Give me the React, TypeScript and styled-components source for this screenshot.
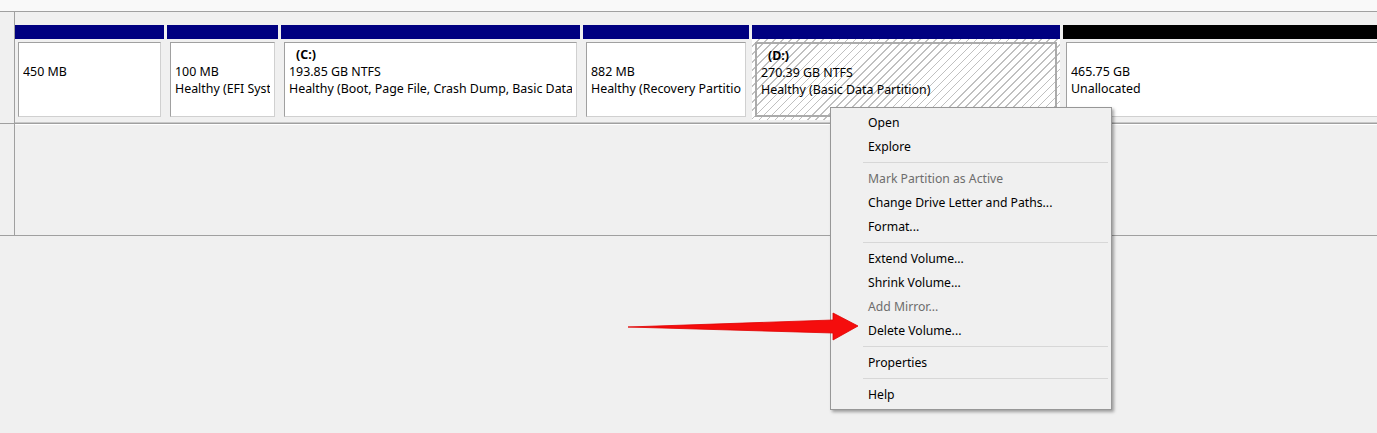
import React from 'react';
import styled, { createGlobalStyle } from 'styled-components';

const GlobalStyle = createGlobalStyle`
  html, body {
    margin: 0;
    padding: 0;
  }
  body {
    background: #f0f0f0;
    font-family: 'Noto Sans', 'Segoe UI', sans-serif;
    font-size: 12px;
    color: #000;
    overflow: hidden;
  }
`;

type Part = {
  width: number;
  label?: string;
  size: string;
  status: string;
  unallocated?: boolean;
  selected?: boolean;
};

const parts: Part[] = [
  { width: 149, size: '450 MB', status: '' },
  { width: 111, size: '100 MB', status: 'Healthy (EFI System Partition)' },
  { width: 299, label: '(C:)', size: '193.85 GB NTFS', status: 'Healthy (Boot, Page File, Crash Dump, Basic Data Partition)' },
  { width: 166, size: '882 MB', status: 'Healthy (Recovery Partition)' },
  { width: 308, label: '(D:)', size: '270.39 GB NTFS', status: 'Healthy (Basic Data Partition)', selected: true },
  { width: 330, size: '465.75 GB', status: 'Unallocated', unallocated: true },
];

type Item = { text: string; disabled?: boolean } | 'sep';

const menu: Item[] = [
  { text: 'Open' },
  { text: 'Explore' },
  'sep',
  { text: 'Mark Partition as Active', disabled: true },
  { text: 'Change Drive Letter and Paths...' },
  { text: 'Format...' },
  'sep',
  { text: 'Extend Volume...' },
  { text: 'Shrink Volume...' },
  { text: 'Add Mirror...', disabled: true },
  { text: 'Delete Volume...' },
  'sep',
  { text: 'Properties' },
  'sep',
  { text: 'Help' },
];

export default function App() {
  return (
    <Screen>
      <GlobalStyle />
      <TopStrip />
      <DiskRow>
        <LabelCell />
        <Partitions>
          {parts.map((p, i) => (
            <Partition key={i} style={{ width: p.width }}>
              <Bar $unallocated={p.unallocated} />
              <Body $selected={p.selected}>
                <Box $selected={p.selected}>
                  <TextClip>
                    <DriveLetter>{p.label ?? '\u00a0'}</DriveLetter>
                    <Line>{p.size}</Line>
                    <Line>{p.status || '\u00a0'}</Line>
                  </TextClip>
                </Box>
              </Body>
            </Partition>
          ))}
        </Partitions>
      </DiskRow>
      <DiskRow>
        <LabelCell />
        <EmptyArea />
      </DiskRow>

      <Menu>
        {menu.map((m, i) =>
          m === 'sep' ? (
            <Separator key={i} />
          ) : (
            <MenuItem key={i} $disabled={m.disabled}>
              {m.text}
            </MenuItem>
          )
        )}
      </Menu>

      <Arrow width="236" height="34" viewBox="0 0 236 34">
        <polygon
          points="2,17 207,10 207,3 232,16 207,30 207,23"
          fill="#f50d0d"
          stroke="#e00000"
          strokeWidth="0.8"
          strokeLinejoin="round"
        />
      </Arrow>
    </Screen>
  );
}

const Screen = styled.div`
  position: relative;
  width: 1377px;
  height: 433px;
  overflow: hidden;
  background: #f0f0f0;
`;

const TopStrip = styled.div`
  height: 11px;
  background: #f9f9f9;
  border-bottom: 1px solid #a0a0a0;
`;

const DiskRow = styled.div`
  display: flex;
  height: 111px;
  border-bottom: 1px solid #a0a0a0;
`;

const LabelCell = styled.div`
  width: 14px;
  flex-shrink: 0;
  border-right: 1px solid #a0a0a0;
  background: #f0f0f0;
`;

const Partitions = styled.div`
  flex: 1;
  display: flex;
  gap: 3px;
  padding-top: 13px;
  padding-bottom: 2px;
  overflow: hidden;
  border-bottom: 1px solid #c8c8c8;
`;

const EmptyArea = styled.div`
  flex: 1;
  border-top: 1px solid #fff;
`;

const Partition = styled.div`
  flex-shrink: 0;
  display: flex;
  flex-direction: column;
`;

const Bar = styled.div<{ $unallocated?: boolean }>`
  height: 14px;
  background: ${(p) => (p.$unallocated ? '#000' : '#000080')};
`;

const Body = styled.div<{ $selected?: boolean }>`
  height: 82px;
  box-sizing: border-box;
  padding: 3px;
  background: ${(p) =>
    p.$selected
      ? 'repeating-linear-gradient(135deg, #fff 0 4.6px, #c0c0c0 4.6px 5.7px)'
      : '#f0f0f0'};
`;

const Box = styled.div<{ $selected?: boolean }>`
  height: 100%;
  box-sizing: border-box;
  padding: 3px 4px 0 4px;
  line-height: 17px;
  background: ${(p) => (p.$selected ? 'transparent' : '#fff')};
  border: ${(p) => (p.$selected ? '2px solid #ababab' : '1px solid #a0a0a0')};
  border-right-color: ${(p) => (p.$selected ? '#ababab' : '#d0d0d0')};
  border-bottom-color: ${(p) => (p.$selected ? '#ababab' : '#d0d0d0')};
`;

const TextClip = styled.div`
  font-size: 12.4px;
  white-space: nowrap;
  overflow: hidden;
`;

const DriveLetter = styled.div`
  font-weight: 700;
  padding-left: 7px;
`;

const Line = styled.div``;

const Menu = styled.div`
  position: absolute;
  left: 830px;
  top: 107px;
  width: 282px;
  box-sizing: border-box;
  padding: 3px 0 2px;
  background: #f0f0f0;
  border: 1px solid #979797;
  box-shadow: 2px 2px 3px rgba(0, 0, 0, 0.35);
`;

const MenuItem = styled.div<{ $disabled?: boolean }>`
  height: 24px;
  line-height: 24px;
  padding-left: 37px;
  font-size: 12.2px;
  color: ${(p) => (p.$disabled ? '#6d6d6d' : '#000')};
`;

const Separator = styled.div`
  height: 1px;
  margin: 3px 3px 4px 32px;
  background: #d7d7d7;
`;

const Arrow = styled.svg`
  position: absolute;
  left: 626px;
  top: 310px;
`;
